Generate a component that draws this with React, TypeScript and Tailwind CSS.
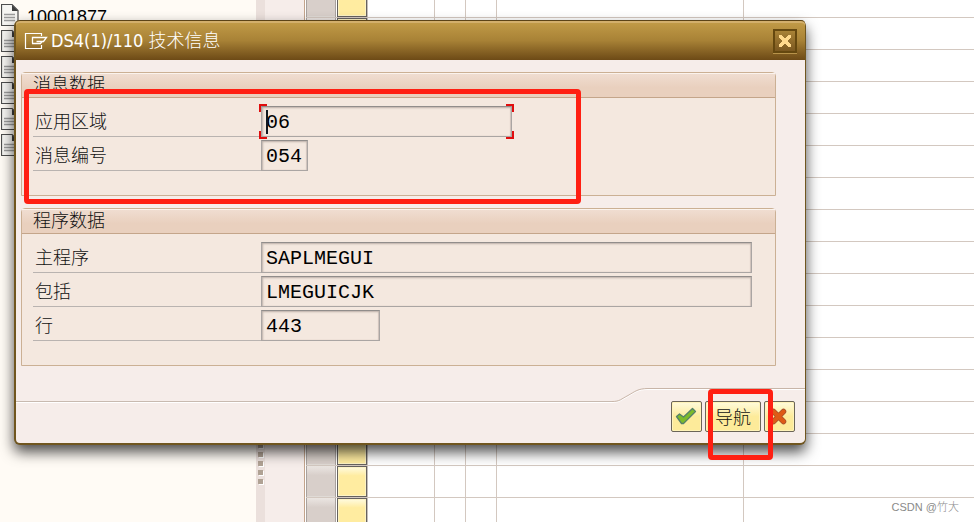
import React from "react";

const cjk = "font-['Liberation_Sans','Noto_Sans_CJK_SC',sans-serif]";

function DocIcon() {
  return (
    <svg width="18" height="22" viewBox="0 0 18 22" className="block">
      <path d="M.5 .5H11L17 6.500V21.500H.5Z" fill="#f6f5f2" stroke="#4d4d4d" strokeWidth="1.2" />
      <path d="M11 1V7H17Z" fill="#3f3f3f" />
      <path d="M3 10.500H14M3 13.500H14M3 16.500H14" stroke="#9b9b9b" strokeWidth="1.4" />
    </svg>
  );
}

function ExitIcon() {
  return (
    <svg width="24" height="18" viewBox="0 0 24 18" fill="none" stroke="#fff" className="block">
      <path d="M17.500 4V1.500H1.500V16.500H17.500V13" strokeWidth="1.2" />
      <path d="M8.500 11.500V5.500H22.500L19.500 9.500H12.500" strokeWidth="1.3" />
      <path d="M8 11.500H16.500L18 9.500" strokeWidth="1.3" />
    </svg>
  );
}

function Row({ id, label, value, width, focused = false }: { id: string; label: string; value: string; width: string; focused?: boolean }) {
  return (
    <div className="flex h-[31px]">
      <label htmlFor={id} className="w-57 border-b border-[#b9b3b0] pl-0.5 text-lg leading-8 font-light">
        {label}
      </label>
      <div className={`relative ${width}`}>
        <input
          id={id}
          readOnly
          defaultValue={value}
          className="block h-full w-full border border-[#aaa5a3] border-t-[#918d8b] bg-[#f4e8df] px-1 pt-0.5 font-['Liberation_Mono','Noto_Sans_CJK_SC',monospace] text-xl text-black shadow-[inset_1px_1px_2px_#bcb0a9,inset_-1px_0_1px_#cfc3bb] outline-none"
        />
        {focused && (
          <>
            <span className="absolute -top-0.5 -left-0.5 size-2 border-t-2 border-l-2 border-[#e00d0d]" />
            <span className="absolute -top-0.5 -right-0.5 size-2 border-t-2 border-r-2 border-[#e00d0d]" />
            <span className="absolute -bottom-0.5 -left-0.5 size-2 border-b-2 border-l-2 border-[#e00d0d]" />
            <span className="absolute -right-0.5 -bottom-0.5 size-2 border-r-2 border-b-2 border-[#e00d0d]" />
            <span className="absolute top-1 left-[5px] h-6 w-0.5 bg-[#101820]" />
          </>
        )}
      </div>
    </div>
  );
}

function Group({ title, children }: { title: string; children: React.ReactNode }) {
  return (
    <section className="rounded-t-sm border border-[#cbb094] bg-[#f4e8df]">
      <h2 className="h-[25px] border-b border-[#c4a58a] bg-linear-to-b from-[#f0ded2] to-[#e9d0be] to-60% pl-[11px] text-lg leading-[25px] font-light shadow-[inset_0_1px_0_#fbf3ed]">
        {title}
      </h2>
      <div className="flex flex-col gap-[3px] px-[11px] pt-2 pb-6">{children}</div>
    </section>
  );
}

const yellow =
  "flex h-[31px] items-center justify-center rounded-xs border border-[#6b6558] bg-linear-to-b from-[#fffbdc] to-[#fdeb9a] to-50% shadow-[inset_0_0_0_1px_#fff3b8]";

export default function App() {
  return (
    <main className={`relative flex h-screen overflow-hidden bg-white text-[#111] ${cjk}`}>
      <aside className="w-64 shrink-0 bg-[#fffbf5] pt-1">
        <ul className="flex flex-col gap-1">
          {["10001877", "", "", "", "", ""].map((name, i) => (
            <li key={i} className="flex h-[22px] gap-2 pl-px text-lg leading-[26px] text-black">
              <DocIcon />
              <span>{name}</span>
            </li>
          ))}
        </ul>
      </aside>
      <div className="flex w-[9px] shrink-0 flex-col items-center justify-end gap-1 bg-[#ebe0dc] pb-[38px]">
        {[0, 1, 2, 3, 4].map((i) => (
          <span key={i} className="size-[5px] shrink-0 bg-[#b0a294] shadow-[1px_1px_0_#fff]" />
        ))}
      </div>
      <div className="w-10 shrink-0 border-r border-[#c3a48c] bg-[#f6edea]" />
      <div className="flex flex-1 flex-col overflow-hidden pl-px">
        {Array.from({ length: 17 }, (_, i) => (
          <div
            key={i}
            className="grid h-8 shrink-0 grid-cols-[30px_32px_67px_31px_31px_247px_1fr] border-b border-[#d3c8c0] first:-mt-3.5"
          >
            <span className="border-x border-[#a9a29e] bg-linear-to-b from-[#ebe6e2] to-[#d8cfca] to-30% shadow-[inset_0_-1px_0_#e0dbd6]" />
            <span className="flex border-r border-[#c5bfba] pl-px">
              <span className="w-[30px] border border-[#66625f] bg-linear-to-b from-[#fffbe0] to-[#ffeca0] to-30% shadow-[inset_0_0_0_1px_#fdf3c4]" />
            </span>
            <span className="border-r border-[#d3c8c0]" />
            <span className="border-r border-[#d3c8c0]" />
            <span className="border-r border-[#d3c8c0]" />
            <span className="border-r border-[#d3c8c0]" />
            <span />
          </div>
        ))}
      </div>

      <div
        role="dialog"
        aria-labelledby="dialog-title"
        className="absolute top-5 right-42 left-3.5 rounded-md border-r border-b-2 border-l-2 border-[#70561f] bg-[#f6edea] shadow-[0_7px_14px_rgba(0,0,0,0.7)]"
      >
        <header className="flex h-10 items-center rounded-t-sm border-t border-[#5c4317] bg-linear-to-b from-[#c39c48] via-[#a88236] to-[#6d4a16] pr-2 pl-2 shadow-[inset_0_2px_0_#d3af6c]">
          <ExitIcon />
          <h1
            id="dialog-title"
            className="flex-1 pl-[3px] font-['DejaVu_Sans_Condensed','Noto_Sans_CJK_SC',sans-serif] text-lg leading-6 font-light text-white"
          >
            DS4(1)/110 技术信息
          </h1>
          <button
            aria-label="Close"
            className="flex h-6 w-6 items-center justify-center border-2 border-[#65480f] bg-linear-to-b from-[#a88236] to-[#7b5820] shadow-[0_1px_0_#b8934a]"
          >
            <svg width="16" height="14" viewBox="0 0 16 14" shapeRendering="crispEdges">
              <path d="M2 1H5V2H6V3H7V4H9V3H10V2H11V1H14V4H13V5H12V6H11V8H12V9H13V10H14V13H11V12H10V11H9V10H7V11H6V12H5V13H2V10H3V9H4V8H5V6H4V5H3V4H2Z" fill="#ffd98c" />
            </svg>
          </button>
        </header>
        <div className="flex flex-col gap-3 pt-3 pr-[29px] pb-[22px] pl-[5px]">
          <Group title="消息数据">
            <Row id="area" label="应用区域" value="06" width="w-[251px]" focused />
            <Row id="number" label="消息编号" value="054" width="w-[47px]" />
          </Group>
          <Group title="程序数据">
            <Row id="program" label="主程序" value="SAPLMEGUI" width="w-[491px]" />
            <Row id="include" label="包括" value="LMEGUICJK" width="w-[491px]" />
            <Row id="line" label="行" value="443" width="w-[119px]" />
          </Group>
        </div>
        <footer>
          <div className="flex h-[15px]">
            <div className="flex-1 border-b border-white">
              <div className="h-full border-b border-[#c8bab0]" />
            </div>
            <svg width="36" height="15" viewBox="0 0 36 15" fill="none">
              <path d="M0 14.500C8 14.500 9 12 16 8.500C23 4.500 26 1.500 36 1.500" stroke="#fff" />
              <path d="M0 13.500C8 13.500 9 11 16 7.500C23 3.500 26 .5 36 .5" stroke="#c8b5a8" />
            </svg>
            <div className="w-[157px] border-t border-[#c8b5a8] shadow-[inset_0_1px_0_#fff]" />
          </div>
          <div className="-mt-0.5 flex justify-end gap-[3px] pr-2.5 pb-[11px]">
            <button aria-label="Continue" className={`w-[31px] ${yellow}`}>
              <svg width="23" height="19" viewBox="0 0 23 19">
                <path d="M1.500 9.500L4.500 7L8.500 10L17.500 1.500L20.500 4.500L8.500 16.500L6.500 16.500Z" fill="#7dbb2a" stroke="#55806a" strokeWidth="1.3" strokeLinejoin="round" />
              </svg>
            </button>
            <button className={`w-14 pt-0.5 text-lg leading-6 font-light ${yellow}`}>导航</button>
            <button aria-label="Cancel" className={`w-[31px] ${yellow}`}>
              <svg width="19" height="17" viewBox="0 0 19 17">
                <path d="M3.500 3.500L13.500 13.500M13.500 3.500L3.500 13.500" stroke="#a5502c" strokeWidth="5.500" strokeLinecap="round" />
                <path d="M3.500 3.500L13.500 13.500M13.500 3.500L3.500 13.500" stroke="#de5a16" strokeWidth="4" strokeLinecap="round" />
              </svg>
            </button>
          </div>
        </footer>
      </div>

      <div className="pointer-events-none absolute top-[89px] left-6 h-[115px] w-[557px] rounded-sm border-5 border-[#ff1f12]" />
      <div className="pointer-events-none absolute top-[389px] left-[708px] h-[71px] w-[65px] rounded-sm border-5 border-[#ff1f12]" />
      <p className="absolute right-[15px] bottom-[6px] text-[11px] leading-[18px] font-light text-[#8a8a8a]">CSDN @竹大</p>
    </main>
  );
}
